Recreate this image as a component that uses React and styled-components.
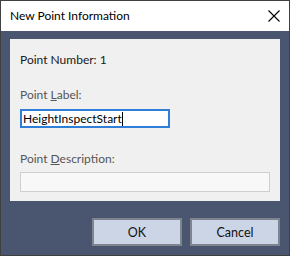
import React from "react";
import styled, { createGlobalStyle } from "styled-components";

const Global = createGlobalStyle`
  html, body { margin: 0; padding: 0; background: #ffffff; }
  * { box-sizing: border-box; }
`;

const Window = styled.div`
  width: 290px;
  height: 256px;
  border: 1px solid #404040;
  display: flex;
  flex-direction: column;
  font-family: "Segoe UI", "Lato", sans-serif;
  font-size: 12px;
  background: #4a5570;
`;

const TitleBar = styled.div`
  height: 30px;
  background: #ffffff;
  display: flex;
  align-items: center;
  justify-content: space-between;
  padding: 0 9px 0 9px;
  color: #000;
`;

const Title = styled.span`
  font-size: 12px;
  line-height: 16px;
`;

const Body = styled.div`
  flex: 1;
  display: flex;
  flex-direction: column;
  padding: 8px 9px 9px 9px;
`;

const Panel = styled.div`
  height: 162px;
  background: #f0f0f0;
  padding: 13px 10px 9px 10px;
  display: flex;
  flex-direction: column;
`;

const Text = styled.div`
  line-height: 16px;
  height: 16px;
  font-size: 12px;
  color: ${(p) => (p.$muted ? "#555555" : "#1a1a1a")};
  margin-top: ${(p) => p.$mt || 0}px;
  margin-bottom: ${(p) => p.$mb || 0}px;
`;

const Field = styled.div`
  width: ${(p) => p.$w}px;
  height: ${(p) => p.$h}px;
  background: ${(p) => (p.$active ? "#ffffff" : "#f8f8f8")};
  border: ${(p) => (p.$active ? "2px solid #2f7fd8" : "1px solid #cfcfcf")};
  padding-left: 1px;
  display: flex;
  align-items: center;
  color: #000;
  font-size: 12px;
  line-height: 16px;
`;

const Caret = styled.span`
  display: inline-block;
  width: 1px;
  height: 14px;
  background: #000;
`;

const Buttons = styled.div`
  margin-top: 17px;
  display: flex;
  justify-content: flex-end;
  gap: 8px;
`;

const Button = styled.button`
  width: 90px;
  height: 28px;
  background: #ccd5e6;
  border: 2px solid #7f8590;
  font-family: inherit;
  font-size: 12.5px;
  color: #111;
  padding: 0;
`;

export default function App() {
  return (
    <>
      <Global />
      <Window>
        <TitleBar>
          <Title>New Point Information</Title>
          <svg width="12" height="12" viewBox="0 0 12 12">
            <path d="M0.5 0.5 L11.5 11.5 M11.5 0.5 L0.5 11.5" stroke="#000" strokeWidth="1.1" />
          </svg>
        </TitleBar>
        <Body>
          <Panel>
            <Text>Point Number: 1</Text>
            <Text $muted $mt={19} $mb={6}>
              Point <u>L</u>abel:
            </Text>
            <Field $active $w={150} $h={19}>
              HeightInspectStart<Caret />
            </Field>
            <Text $muted $mt={23} $mb={5}>
              Point <u>D</u>escription:
            </Text>
            <Field $w={250} $h={20} />
          </Panel>
          <Buttons>
            <Button>OK</Button>
            <Button>Cancel</Button>
          </Buttons>
        </Body>
      </Window>
    </>
  );
}
